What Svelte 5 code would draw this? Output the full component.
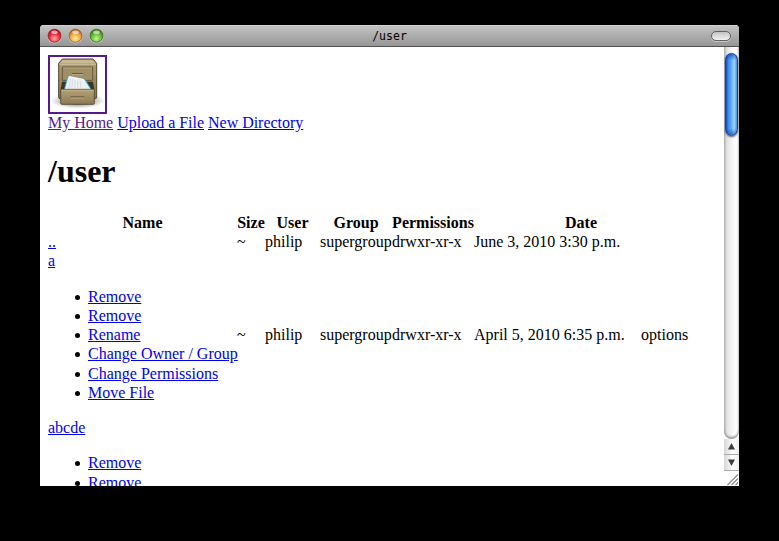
<script>
  const actions = ['Remove', 'Remove', 'Rename', 'Change Owner / Group', 'Change Permissions', 'Move File'];
  const rows = [
    { name: '..', date: 'June 3, 2010 3:30 p.m.', actions: [], options: '', filled: true },
    { name: 'a', date: 'April 5, 2010 6:35 p.m.', actions, options: 'options', filled: true },
    { name: 'abcde', date: '', actions: actions.slice(0, 2), options: '', filled: false }
  ];
  const lights = [
    { id: 'red', edge: '#8d0d16', mid: '#f0303c', low: '#ffb1ae' },
    { id: 'amber', edge: '#9a4f14', mid: '#f5a84c', low: '#fff391' },
    { id: 'green', edge: '#2b6212', mid: '#67bb3b', low: '#c8f58e' }
  ];
</script>

<div class="desktop">
  <div class="window">
    <header class="titlebar">
      <div class="lights">
        {#each lights as l}
          <svg width="15" height="16" viewBox="0 0 15 16">
            <defs>
              <radialGradient id={l.id} cx=".5" cy=".72" r=".75">
                <stop offset="0" stop-color={l.low} />
                <stop offset=".5" stop-color={l.mid} />
                <stop offset="1" stop-color={l.edge} />
              </radialGradient>
            </defs>
            <circle cx="7.5" cy="8.4" r="7.2" fill="#d5d5d5" opacity=".6" />
            <circle cx="7.5" cy="7.7" r="6.5" fill="url(#{l.id})" stroke={l.edge} stroke-width=".8" stroke-opacity=".85" />
            <ellipse cx="7.5" cy="4.2" rx="3.3" ry="1.8" fill="#fff" opacity=".6" />
          </svg>
        {/each}
      </div>
      <div class="title">/user</div>
      <div class="pill"></div>
    </header>

    <div class="body">
      <main>
        <a class="logo" href="#home" aria-label="Home">
          <svg width="55" height="55" viewBox="18 21 165 165">
            <defs>
              <linearGradient id="wood" x1="0" x2="0" y1="0" y2="1">
                <stop offset="0" stop-color="#b4a27b" />
                <stop offset="1" stop-color="#85744e" />
              </linearGradient>
              <linearGradient id="front" x1="0" x2="0" y1="0" y2="1">
                <stop offset="0" stop-color="#b5a276" />
                <stop offset="1" stop-color="#8b7a54" />
              </linearGradient>
              <radialGradient id="shade">
                <stop offset=".45" stop-color="#777" stop-opacity=".7" />
                <stop offset="1" stop-color="#999" stop-opacity="0" />
              </radialGradient>
            </defs>
            <ellipse cx="101" cy="153" rx="82" ry="23" fill="url(#shade)" />
            <path d="M55 27H147L158 40V142Q158 146 154 146H48Q44 146 44 142V40Z" fill="url(#wood)" stroke="#51452f" stroke-width="3" />
            <path d="M57 30H145L154 40H48Z" fill="#c9ba95" />
            <path d="M46 43H156" stroke="#e0d3b1" stroke-width="2" />
            <path d="M55 51H146V91H55Z" fill="#a08e66" stroke="#665838" stroke-width="3" />
            <path d="M57 54H144" stroke="#c7b88f" stroke-width="2" />
            <path d="M84 71H117" stroke="#5d5033" stroke-width="3" />
            <path d="M84 74H117" stroke="#d2c49d" stroke-width="2" />
            <path d="M54 95H147L151 119H50Z" fill="#3c3424" />
            <path d="M60 118L71 78L76 79L66 118Z" fill="#35aece" />
            <path d="M105 83L124 88L142 118H132Z" fill="#35aece" />
            <path d="M64 118L75 79L119 88L138 118Z" fill="#eef1f4" stroke="#fff" stroke-width="2" />
            <path d="M80 87L74 115M87 88L83 115M94 90L92 115M101 92L101 115M108 93L111 115" stroke="#c8d0d9" stroke-width="2" />
            <path d="M50 118H151V159Q151 163 147 163H54Q50 163 50 159Z" fill="url(#front)" stroke="#4f432c" stroke-width="2.5" />
            <path d="M52 120.5H149" stroke="#d5c69e" stroke-width="2" />
            <path d="M80 141H121" stroke="#54472c" stroke-width="3" />
            <path d="M80 144H121" stroke="#d5c69e" stroke-width="2" />
          </svg>
        </a>
        <nav>
          <a class="visited" href="#home">My Home</a>
          <a href="#upload">Upload a File</a>
          <a href="#new">New Directory</a>
        </nav>
        <h1>/user</h1>
        <table>
          <colgroup>
            <col class="c-name" /><col class="c-size" /><col class="c-user" /><col class="c-group" />
            <col class="c-perm" /><col class="c-date" /><col class="c-opt" />
          </colgroup>
          <thead>
            <tr>
              <th>Name</th><th>Size</th><th>User</th><th>Group</th><th>Permissions</th><th colspan="2">Date</th>
            </tr>
          </thead>
          <tbody>
            {#each rows as r}
              <tr>
                <td>
                  <a href="#entry">{r.name}</a>
                  {#if r.actions.length}
                    <ul>
                      {#each r.actions as action}<li><a href="#action">{action}</a></li>{/each}
                    </ul>
                  {/if}
                </td>
                {#if r.filled}
                  <td>~</td><td>philip</td><td>supergroup</td><td>drwxr-xr-x</td><td>{r.date}</td><td>{r.options}</td>
                {/if}
              </tr>
            {/each}
          </tbody>
        </table>
      </main>

      <aside>
        <div class="track"><div class="thumb"></div></div>
        <div class="arrow"><svg width="15" height="16"><path d="M7.5 4L11 10.5H4Z" fill="#3c3c3c" /></svg></div>
        <div class="arrow down"><svg width="15" height="16"><path d="M7.5 11L11 4.5H4Z" fill="#3c3c3c" /></svg></div>
        <svg class="grip" width="15" height="15"><path d="M3.5 14L14 3.5M7.5 14L14 7.5M11.5 14L14 11.5" stroke="#888" stroke-width="1.2" /></svg>
      </aside>
    </div>
  </div>
</div>

<style>
  :global(body) { background: #000; overflow: hidden; }
  .desktop { box-sizing: border-box; width: 779px; height: 541px; padding: 25px 40px 55px; background: #000; }
  .window { width: 699px; height: 461px; display: flex; flex-direction: column; overflow: hidden; background: #fff; border-radius: 4px 4px 0 0; }
  .titlebar {
    box-sizing: border-box; height: 22px; flex: none; display: grid; grid-template-columns: 1fr auto 1fr; align-items: center;
    background: linear-gradient(#c2c2c2, #969696); border-top: 1px solid #d0d0d0; border-bottom: 1px solid #515151;
  }
  .lights { display: flex; gap: 6px; padding: 0 0 0 7px; }
  .lights svg { display: block; }
  .title { font: 11.5px/18px "DejaVu Sans Mono", monospace; color: #000; padding-bottom: 1px; }
  .pill {
    box-sizing: border-box; justify-self: end; margin: 0 8px 1px 0; width: 20px; height: 10px; border: 1px solid #626262; border-radius: 5px;
    background: linear-gradient(#c4c4c4, #f1f1f1); box-shadow: 0 1px 0 #c8c8c8;
  }
  .body { flex: 1; display: flex; min-height: 0; }
  main { box-sizing: border-box; width: 684px; padding: 8px 0 0 8px; overflow: hidden; font: 16px/19.2px "Liberation Serif", serif; color: #000; }
  a { color: #0000ee; text-decoration: underline; }
  .logo { display: block; width: 55px; height: 55px; border: 2px solid #551a8b; }
  .logo svg { display: block; }
  nav { height: 19px; line-height: 18px; white-space: nowrap; letter-spacing: -0.02px; }
  .visited { color: #551a8b; }
  h1 { margin: 19px 0 22.9px; font-size: 32px; line-height: 38px; font-weight: bold; }
  table { width: 640px; table-layout: fixed; border-collapse: collapse; white-space: nowrap; }
  .c-name { width: 189px; }
  .c-size { width: 28px; }
  .c-user { width: 55px; }
  .c-group { width: 72px; }
  .c-perm { width: 82px; }
  .c-date { width: 167px; }
  .c-opt { width: 47px; }
  th, td { padding: 0; text-align: left; vertical-align: middle; }
  th { text-align: center; }
  ul { margin: 16.2px 0 16.1px; padding-left: 40px; list-style: none; }
  li::before {
    content: ""; display: inline-block; width: 5px; height: 5px; margin: 0 8px 2px -13px;
    border-radius: 50%; background: #000; vertical-align: baseline;
  }
  aside { width: 15px; display: flex; flex-direction: column; background: #fff; }
  .track {
    box-sizing: border-box; height: 392px; padding-top: 6px; border-radius: 0 0 8px 8px;
    background: linear-gradient(90deg, #b5b5b5, #e4e4e4 20%, #f8f8f8 60%, #fff 85%, #d8d8d8); box-shadow: inset 0 -2px 2px #999;
  }
  .thumb {
    box-sizing: border-box; height: 83px; margin: 0 1px; border-radius: 7px; border: 1px solid #174499;
    background:
      linear-gradient(rgba(0, 40, 140, .55), transparent 8%, transparent 92%, rgba(0, 40, 140, .5)),
      linear-gradient(90deg, #1148c4, #3f8def 22%, #62aef8 50%, #9bd5ff 75%, #4b8cd4);
    box-shadow: 0 1px 2px #555;
  }
  .arrow { box-sizing: border-box; height: 16px; border-bottom: 1px solid #aaa; background: linear-gradient(90deg, #d6d6d6, #fff 60%, #eee); }
  .arrow svg, .grip { display: block; }
</style>
